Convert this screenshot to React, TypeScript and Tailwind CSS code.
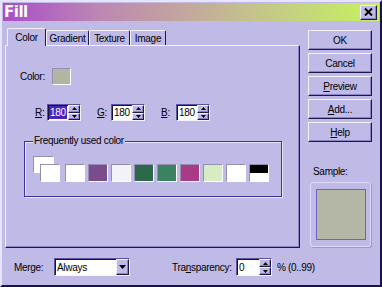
import React from "react";

const raised =
  "border border-t-[#f4f2ff] border-l-[#f4f2ff] border-b-[#1c1850] border-r-[#1c1850] shadow-[inset_-1px_-1px_0_#8a84c4]";
const sunken =
  "border border-t-[#5a54a0] border-l-[#5a54a0] border-b-[#f4f2ff] border-r-[#f4f2ff] shadow-[inset_1px_1px_0_#141040]";
const swatchBorder =
  "border border-t-[#948eb4] border-l-[#948eb4] border-b-white border-r-white";

const swatches = ["#ffffff", "#7a4c8e", "#f2f2f8", "#2c684c", "#3a8262", "#a83a88", "#d6ecc2", "#ffffff"];

function Arrow({ up }: { up?: boolean }) {
  return (
    <svg width="5" height="3" viewBox="0 0 5 3">
      <path d={up ? "M2.5 0L5 3H0z" : "M0 0H5L2.5 3z"} fill="#000" />
    </svg>
  );
}

function Spin() {
  return (
    <div className="flex h-full w-[12px] shrink-0 flex-col">
      <div className={`flex flex-1 items-center justify-center bg-[#c0bae6] ${raised}`}>
        <Arrow up />
      </div>
      <div className={`flex flex-1 items-center justify-center bg-[#c0bae6] ${raised}`}>
        <Arrow />
      </div>
    </div>
  );
}

function Field({ value, className, selected }: { value: string; className: string; selected?: boolean }) {
  return (
    <div className={`flex h-[17px] items-stretch bg-white ${sunken} ${className}`}>
      <div className="flex flex-1 items-center pl-[1px]">
        <span className={selected ? "bg-[#4a22c0] px-px leading-[13px] text-white" : "px-px leading-[13px]"}>
          {value}
        </span>
      </div>
      <Spin />
    </div>
  );
}

function Button({ children }: { children: React.ReactNode }) {
  return (
    <div className={`flex h-[20px] w-[64px] items-center justify-center ${raised}`}>{children}</div>
  );
}

export default function App() {
  return (
    <div className="flex h-[287px] w-[382px] flex-col border-2 border-t-[#e8e4ff] border-l-[#e8e4ff] border-b-[#181448] border-r-[#181448] bg-[#c0bae6] p-px font-['Liberation_Sans',Arial,sans-serif] text-[10px] tracking-[-0.3px] text-black">
      {/* Title bar */}
      <div className="flex h-[18px] shrink-0 items-center justify-between bg-[linear-gradient(to_right,#aa4cc8,#bc86b4_25%,#c2a2a0_45%,#c4c888_70%,#c6f25e)] pl-[1px] pr-[2px]">
        <span className="font-['DejaVu_Sans',sans-serif] text-[15px] font-bold tracking-[-0.5px] text-white">Fill</span>
        <div className={`flex h-[15px] w-[17px] items-center justify-center bg-[#c0bae6] ${raised}`}>
          <svg width="9" height="8" viewBox="0 0 9 8">
            <path d="M1 0.5L8 7.5M8 0.5L1 7.5" stroke="#000" strokeWidth="2" />
          </svg>
        </div>
      </div>

      <div className="flex flex-1 flex-col pl-[2px]">
        <div className="flex">
          {/* Tabs + panel */}
          <div className="flex w-[295px] flex-col pt-[7px]">
            <div className="flex h-[17px] items-end pl-[2px]">
              <div className="relative z-10 -mb-px flex h-[18px] w-[39px] items-center justify-center rounded-t-[2px] border-l border-t border-r border-l-[#f4f2ff] border-t-[#f4f2ff] border-r-[#1c1850] bg-[#c0bae6]">
                Color
              </div>
              <div className="flex h-[15px] w-[43px] items-center justify-center rounded-t-[2px] border-l border-t border-r border-l-[#f4f2ff] border-t-[#f4f2ff] border-r-[#1c1850]">
                Gradient
              </div>
              <div className="flex h-[15px] w-[41px] items-center justify-center rounded-t-[2px] border-l border-t border-r border-l-[#f4f2ff] border-t-[#f4f2ff] border-r-[#1c1850]">
                Texture
              </div>
              <div className="flex h-[15px] w-[36px] items-center justify-center rounded-t-[2px] border-l border-t border-r border-l-[#f4f2ff] border-t-[#f4f2ff] border-r-[#1c1850]">
                Image
              </div>
            </div>
            <div className="flex h-[203px] flex-col border border-t-[#f4f2ff] border-l-[#f4f2ff] border-b-[#1c1850] border-r-[#1c1850] shadow-[inset_-1px_-1px_0_#8a84c4]">
              <div className="mt-[22px] flex items-center pl-[14px]">
                <span className="w-[32px]">Color:</span>
                <div className={`h-[17px] w-[19px] bg-[#b2b4a4] ${swatchBorder}`} />
              </div>

              <div className="mt-[19px] flex h-[17px] items-center pl-[29px]">
                <span className="w-[12px]">
                  <u>R</u>:
                </span>
                <Field value="180" className="w-[34px]" selected />
                <span className="ml-[16px] w-[14px]">
                  <u>G</u>:
                </span>
                <Field value="180" className="w-[34px]" />
                <span className="ml-[16px] w-[15px]">
                  <u>B</u>:
                </span>
                <Field value="180" className="w-[34px]" />
              </div>

              <div className="relative ml-[18px] mt-[20px] h-[56px] w-[258px] border border-[#3c3690] shadow-[inset_1px_1px_0_#e8e4ff,1px_1px_0_#e8e4ff] pl-[8px] pt-[14px]">
                <span className="absolute -top-[7px] left-[8px] bg-[#c0bae6] px-px leading-[12px]">Frequently used color</span>
                <div className="flex items-end">
                  <div className="relative h-[26px] w-[27px]">
                    <div className={`absolute left-0 top-0 h-[17px] w-[21px] bg-white ${swatchBorder}`} />
                    <div className={`absolute bottom-0 right-0 h-[18px] w-[20px] bg-white ${swatchBorder}`} />
                  </div>
                  <div className="ml-[5px] flex gap-[3px]">
                    {swatches.map((c, i) => (
                      <div key={i} className={`h-[18px] w-[20px] ${swatchBorder}`} style={{ backgroundColor: c }} />
                    ))}
                    <div className={`flex h-[18px] w-[20px] flex-col bg-white ${swatchBorder}`}>
                      <div className="h-[8px] bg-black" />
                    </div>
                  </div>
                </div>
              </div>
            </div>
          </div>

          {/* Right column */}
          <div className="ml-[8px] flex flex-col pt-[9px]">
            <div className="flex flex-col gap-[3px]">
              <Button>OK</Button>
              <Button>Cancel</Button>
              <Button>
                <span>
                  <u>P</u>review
                </span>
              </Button>
              <Button>
                <span>
                  <u>A</u>dd...
                </span>
              </Button>
              <Button>
                <span>
                  <u>H</u>elp
                </span>
              </Button>
            </div>
            <span className="ml-[5px] mt-[24px] leading-[12px]">Sample:</span>
            <div className="ml-[2px] mt-[4px] flex h-[65px] w-[61px] items-center justify-center rounded-[3px] border border-[#dedaff] shadow-[1px_1px_0_#9a94d0]">
              <div className="h-[51px] w-[50px] border border-[#6a62c8] bg-[#b4b6a6]" />
            </div>
          </div>
        </div>

        {/* Bottom row */}
        <div className="mt-[10px] flex h-[18px] items-center pl-[9px]">
          <span className="w-[40px]">
            Mer<u>g</u>e:
          </span>
          <div className={`flex h-[18px] w-[76px] items-stretch bg-white ${sunken}`}>
            <span className="flex flex-1 items-center pl-[2px]">Always</span>
            <div className={`flex w-[13px] items-center justify-center bg-[#c0bae6] ${raised}`}>
              <svg width="7" height="4" viewBox="0 0 7 4">
                <path d="M0 0H7L3.5 4z" fill="#000" />
              </svg>
            </div>
          </div>
          <span className="ml-[42px] w-[64px]">
            Tra<u>n</u>sparency:
          </span>
          <Field value="0" className="h-[18px] w-[36px]" />
          <span className="ml-[5px]">% (0..99)</span>
        </div>
      </div>
    </div>
  );
}
